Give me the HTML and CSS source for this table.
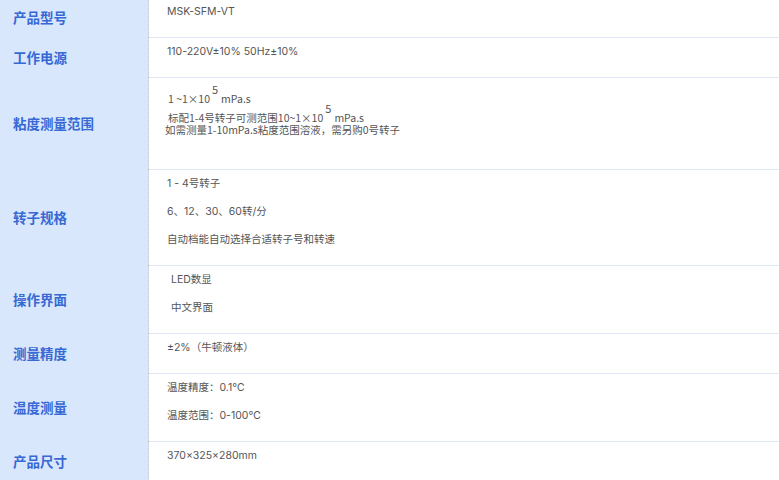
FILE: index.html
```html
<!DOCTYPE html>
<html lang="zh">
<head>
<meta charset="utf-8">
<title>产品参数</title>
<link rel="stylesheet" href="styles.css">
</head>
<body>
<div class="spec">
  <div class="row">
    <div class="label">产品型号</div>
    <div class="value"><p>MSK-SFM-VT</p></div>
  </div>
  <div class="row">
    <div class="label">工作电源</div>
    <div class="value"><p>110-220V±10% 50Hz±10%</p></div>
  </div>
  <div class="row">
    <div class="label">粘度测量范围</div>
    <div class="value rich">
      <p class="r1">1 ~1×10<sup>5</sup>mPa.s</p>
      <p class="r2">标配1-4号转子可测范围10~1×10<sup>5</sup>mPa.s</p>
      <p class="r3">如需测量1-10mPa.s粘度范围溶液，需另购0号转子</p>
    </div>
  </div>
  <div class="row">
    <div class="label">转子规格</div>
    <div class="value">
      <p>1 - 4号转子</p>
      <p>6、12、30、60转/分</p>
      <p>自动档能自动选择合适转子号和转速</p>
    </div>
  </div>
  <div class="row">
    <div class="label">操作界面</div>
    <div class="value indent">
      <p>LED数显</p>
      <p>中文界面</p>
    </div>
  </div>
  <div class="row">
    <div class="label">测量精度</div>
    <div class="value"><p>±2%（牛顿液体）</p></div>
  </div>
  <div class="row">
    <div class="label">温度测量</div>
    <div class="value">
      <p>温度精度：0.1℃</p>
      <p>温度范围：0-100℃</p>
    </div>
  </div>
  <div class="row">
    <div class="label">产品尺寸</div>
    <div class="value"><p>370×325×280mm</p></div>
  </div>
</div>
</body>
</html>
```

FILE: styles.css
```css
html, body {
  margin: 0;
  padding: 0;
  overflow: hidden;
  background: #ffffff;
}

.spec {
  margin-top: -3px;
  display: flex;
  flex-direction: column;
  width: 779px;
}

.row {
  display: flex;
}

.label {
  width: 135px;
  flex: none;
  padding-left: 13px;
  background: #d9e7fd;
  border-right: 1px dotted #c4c8cf;
  display: flex;
  align-items: center;
  font-family: "Noto Sans CJK SC", "Noto Sans", sans-serif;
  font-weight: bold;
  font-size: 13.5px;
  color: #3769d4;
  padding-bottom: 1px;
}

.value {
  flex: 1;
  border-top: 1px solid #dfe6f3;
  padding: 0 0 11px 18px;
  font-family: "Inter", "Noto Sans CJK SC", sans-serif;
  font-size: 10.5px;
  color: #555555;
}

.value p {
  margin: 0;
  line-height: 28px;
}

.value.indent {
  padding-left: 22px;
}

.value.rich {
  padding-top: 15px;
  padding-bottom: 34px;
  font-family: "Noto Sans CJK SC", "Liberation Mono", monospace;
  font-size: 10.5px;
}

.value.rich p {
  line-height: 11px;
  height: 11px;
}

.value.rich .r1 {
  padding-left: 1px;
  margin-bottom: 8px;
}

.value.rich .r2 {
  padding-left: 1px;
}

.value.rich .r3 {
  margin-left: -2px;
  margin-top: 1px;
}

.value.rich sup {
  font-size: 11px;
  vertical-align: baseline;
  line-height: 0;
  position: relative;
  top: -9px;
  margin: 0 3px 0 2px;
}
```
